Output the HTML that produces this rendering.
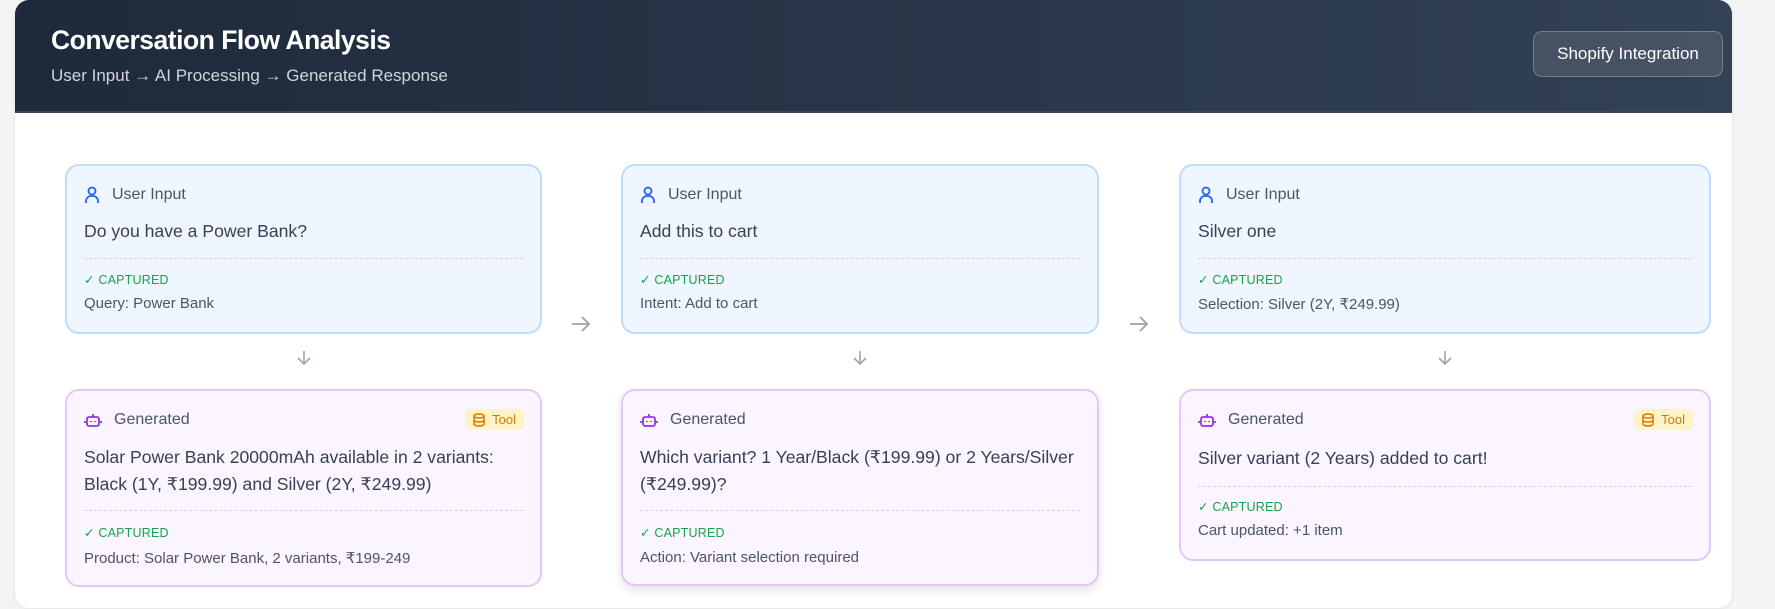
<!DOCTYPE html>
<html><head><meta charset="utf-8"><style>
*{box-sizing:border-box;margin:0;padding:0}
body{width:1775px;height:609px;background:#f3f4f6;font-family:"Liberation Sans",sans-serif;position:relative;overflow:hidden;color:#374151}
.wrap{position:absolute;left:15px;top:0;width:1717px;height:608px;background:#fff;border-radius:14px;overflow:hidden;box-shadow:0 1px 4px rgba(0,0,0,.08)}
.hdr{position:absolute;left:0;top:0;width:100%;height:113px;background:linear-gradient(90deg,#1e293b,#334155);border-bottom:2px solid #3b4658}
.t{position:absolute;left:36px;top:25px;color:#fff;font-size:26.5px;font-weight:bold;letter-spacing:-0.5px}
.st{position:absolute;left:36px;top:66px;color:#d1d5db;font-size:17px}
.btn{position:absolute;left:1518px;top:31px;width:190px;height:46px;border:1.5px solid rgba(255,255,255,.25);background:rgba(255,255,255,.1);border-radius:9px;color:#fff;font-size:17px;text-align:center;line-height:43px}
.c{position:absolute;border-radius:14px;border:2px solid #bfdbfe;background:#eff6ff}
.g{border-color:#e3c6fb;background:#faf5ff}
.lab{position:absolute;top:20px;left:17px;font-size:16px;color:#4b5563;display:flex;align-items:center;gap:12px}
.m{position:absolute;left:17px;right:14px;font-size:17.6px;line-height:27px;color:#374151}
.d{position:absolute;left:17px;right:17px;border-top:1.5px dashed #d1d5db}
.cap{position:absolute;left:17px;font-size:12.5px;color:#16a34a;letter-spacing:.2px}
.det{position:absolute;left:17px;font-size:15px;color:#4b5563}
.tool{position:absolute;right:16px;top:18px;background:#fef3c7;color:#d97706;font-size:13px;border-radius:5px;padding:3px 8px;display:flex;align-items:center;gap:7px}
</style></head><body>
<div class="wrap">
<div class="hdr"><div class="t">Conversation Flow Analysis</div><div class="st">User Input → AI Processing → Generated Response</div><div class="btn">Shopify Integration</div></div>
</div>

<!-- col1 -->
<div class="c" style="left:65px;top:164px;width:477px;height:170px">
<div class="lab"><svg width="16" height="18" viewBox="0 0 16 18" fill="none" stroke="#2563eb" stroke-width="1.8"><circle cx="8" cy="5" r="3.5"/><path d="M2 17v-2a5 5 0 0 1 5-5h2a5 5 0 0 1 5 5v2"/></svg>User Input</div>
<div class="m" style="top:52px">Do you have a Power Bank?</div><div class="d" style="top:92px"></div>
<div class="cap" style="top:106px">✓ CAPTURED</div><div class="det" style="top:129px">Query: Power Bank</div></div>
<svg style="position:absolute;left:295px;top:349px" width="18" height="18" viewBox="0 0 18 18" fill="none" stroke="#9ca3af" stroke-width="1.6"><path d="M9 2v13M3 9l6 6 6-6"/></svg>
<div class="c g" style="left:65px;top:389px;width:477px;height:198px">
<div class="lab"><svg width="18" height="16" viewBox="0 0 18 16" fill="none" stroke="#9333ea" stroke-width="1.8"><rect x="3" y="5" width="12" height="9" rx="2"/><path d="M9 5V2M1 9v2M17 9v2M7 9v1M11 9v1"/></svg>Generated</div>
<div class="tool"><svg width="12" height="14" viewBox="0 0 12 14" fill="none" stroke="#d97706" stroke-width="1.5"><ellipse cx="6" cy="3" rx="5" ry="2"/><path d="M1 3v8c0 1.1 2.2 2 5 2s5-.9 5-2V3M1 7c0 1.1 2.2 2 5 2s5-.9 5-2"/></svg>Tool</div>
<div class="m" style="top:53px">Solar Power Bank 20000mAh available in 2 variants: Black (1Y, ₹199.99) and Silver (2Y, ₹249.99)</div><div class="d" style="top:119px"></div>
<div class="cap" style="top:134px">✓ CAPTURED</div><div class="det" style="top:158px">Product: Solar Power Bank, 2 variants, ₹199-249</div></div>

<svg style="position:absolute;left:570px;top:314px" width="22" height="20" viewBox="0 0 22 20" fill="none" stroke="#9ca3af" stroke-width="1.8"><path d="M2 10h17M12 3l7 7-7 7"/></svg>

<!-- col2 -->
<div class="c" style="left:621px;top:164px;width:478px;height:170px">
<div class="lab"><svg width="16" height="18" viewBox="0 0 16 18" fill="none" stroke="#2563eb" stroke-width="1.8"><circle cx="8" cy="5" r="3.5"/><path d="M2 17v-2a5 5 0 0 1 5-5h2a5 5 0 0 1 5 5v2"/></svg>User Input</div>
<div class="m" style="top:52px">Add this to cart</div><div class="d" style="top:92px"></div>
<div class="cap" style="top:106px">✓ CAPTURED</div><div class="det" style="top:129px">Intent: Add to cart</div></div>
<svg style="position:absolute;left:851px;top:349px" width="18" height="18" viewBox="0 0 18 18" fill="none" stroke="#9ca3af" stroke-width="1.6"><path d="M9 2v13M3 9l6 6 6-6"/></svg>
<div class="c g" style="left:621px;top:389px;width:478px;height:197px;box-shadow:0 4px 10px rgba(0,0,0,.12)">
<div class="lab"><svg width="18" height="16" viewBox="0 0 18 16" fill="none" stroke="#9333ea" stroke-width="1.8"><rect x="3" y="5" width="12" height="9" rx="2"/><path d="M9 5V2M1 9v2M17 9v2M7 9v1M11 9v1"/></svg>Generated</div>
<div class="m" style="top:53px">Which variant? 1 Year/Black (₹199.99) or 2 Years/Silver<br>(₹249.99)?</div><div class="d" style="top:119px"></div>
<div class="cap" style="top:134px">✓ CAPTURED</div><div class="det" style="top:158px">Action: Variant selection required</div></div>

<svg style="position:absolute;left:1128px;top:314px" width="22" height="20" viewBox="0 0 22 20" fill="none" stroke="#9ca3af" stroke-width="1.8"><path d="M2 10h17M12 3l7 7-7 7"/></svg>

<!-- col3 -->
<div class="c" style="left:1179px;top:164px;width:532px;height:170px">
<div class="lab"><svg width="16" height="18" viewBox="0 0 16 18" fill="none" stroke="#2563eb" stroke-width="1.8"><circle cx="8" cy="5" r="3.5"/><path d="M2 17v-2a5 5 0 0 1 5-5h2a5 5 0 0 1 5 5v2"/></svg>User Input</div>
<div class="m" style="top:52px">Silver one</div><div class="d" style="top:92px"></div>
<div class="cap" style="top:106px">✓ CAPTURED</div><div class="det" style="top:129px">Selection: Silver (2Y, ₹249.99)</div></div>
<svg style="position:absolute;left:1436px;top:349px" width="18" height="18" viewBox="0 0 18 18" fill="none" stroke="#9ca3af" stroke-width="1.6"><path d="M9 2v13M3 9l6 6 6-6"/></svg>
<div class="c g" style="left:1179px;top:389px;width:532px;height:172px">
<div class="lab"><svg width="18" height="16" viewBox="0 0 18 16" fill="none" stroke="#9333ea" stroke-width="1.8"><rect x="3" y="5" width="12" height="9" rx="2"/><path d="M9 5V2M1 9v2M17 9v2M7 9v1M11 9v1"/></svg>Generated</div>
<div class="tool"><svg width="12" height="14" viewBox="0 0 12 14" fill="none" stroke="#d97706" stroke-width="1.5"><ellipse cx="6" cy="3" rx="5" ry="2"/><path d="M1 3v8c0 1.1 2.2 2 5 2s5-.9 5-2V3M1 7c0 1.1 2.2 2 5 2s5-.9 5-2"/></svg>Tool</div>
<div class="m" style="top:54px">Silver variant (2 Years) added to cart!</div><div class="d" style="top:95px"></div>
<div class="cap" style="top:108px">✓ CAPTURED</div><div class="det" style="top:131px">Cart updated: +1 item</div></div>
</body></html>
